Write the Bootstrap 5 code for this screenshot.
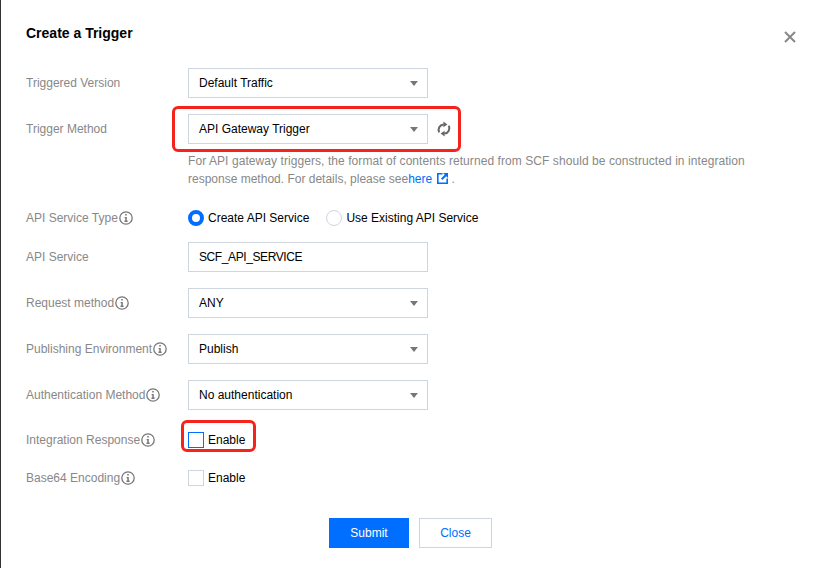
<!DOCTYPE html>
<html lang="en">
<head>
<meta charset="utf-8">
<title>Create a Trigger</title>
<link href="https://cdn.jsdelivr.net/npm/bootstrap@5.3.0/dist/css/bootstrap.min.css" rel="stylesheet">
<style>
html,body{height:568px;overflow:hidden;background:#fff}
body{font-family:"Liberation Sans",Arial,sans-serif;font-size:12px;color:#000;border-left:1px solid #333}
.dlg{position:relative;height:568px;padding:24px 0 0 25px}
.dlg-title{font-size:14px;font-weight:700;line-height:18px;margin:0 0 26px;color:#000}
.dlg-x{position:absolute;left:781px;top:27px;width:16px;height:16px;padding:0;border:0;background:none;display:block}
.frow{min-height:30px;margin-bottom:16px}
.frow-s{min-height:16px}
.flabel{width:162px;flex:none;color:#888;line-height:16px}
.fsel.form-select,.finp.form-control{width:240px;height:30px;border-radius:0;border:1px solid #cfd5de;font-size:12px;line-height:18px;padding:5px 30px 5px 10px;color:#000;box-shadow:none;background-color:#fff}
.finp.form-control{letter-spacing:-.4px}
.fsel.form-select{background-image:url("data:image/svg+xml,%3Csvg xmlns='http://www.w3.org/2000/svg' width='8' height='5'%3E%3Cpath d='M0 0h8L4 5z' fill='%23777'/%3E%3C/svg%3E");background-size:8px 5px;background-position:right 9px center}
.hint{margin:-8px 0 0 162px;width:580px;line-height:18px;color:#888;height:58px}
.hint a{color:#006eff;text-decoration:none}
.hint-l1{letter-spacing:.07px}
.ext-i{margin-left:5px;vertical-align:-1px}
.inf{margin-left:1px;vertical-align:-3px}
.fradio{width:16px;height:16px;border-radius:50%;border:1px solid #cfd5de;background:#fff;flex:none;margin:0}
.fradio.on{border:4px solid #006eff}
.fradio.gap-r{margin-left:17px}
.fcheck{width:16px;height:16px;border:1px solid #cfd5de;background:#fff;flex:none;margin:0}
.fcheck.on{border-color:#006eff}
.fopt{line-height:16px;color:#000}
.rbox{position:absolute;border:3px solid #f5231c;border-radius:6px;pointer-events:none}
.rb1{left:171px;top:106px;width:289px;height:46px}
.rb2{left:180px;top:420px;width:75px;height:32px}
.actions{position:absolute;left:328px;top:518px;gap:10px}
.btn-sub.btn{width:80px;height:30px;border-radius:0;background:#006eff;border:1px solid #006eff;color:#fff;font-size:12px;padding:0}
.btn-cl.btn{width:73px;height:30px;border-radius:0;background:#fff;border:1px solid #cfd5de;color:#006eff;font-size:12px;padding:0}
.mt-chk{margin-top:22px}
</style>
</head>
<body>
<div class="dlg">
  <h1 class="dlg-title">Create a Trigger</h1>
  <button class="dlg-x" type="button" aria-label="Close"><svg width="16" height="16" viewBox="0 0 16 16"><path d="M3 3l10 10M13 3L3 13" stroke="#888" stroke-width="2" fill="none"/></svg></button>

  <div class="frow d-flex align-items-center">
    <div class="flabel">Triggered Version</div>
    <select class="form-select fsel"><option>Default Traffic</option></select>
  </div>
  <div class="frow d-flex align-items-center">
    <div class="flabel">Trigger Method</div>
    <select class="form-select fsel"><option>API Gateway Trigger</option></select>
    <svg class="ms-2" width="16" height="16" viewBox="0 0 16 16" fill="none" stroke="#666" stroke-width="2"><path d="M3.2 11.4C1.6 8 3.4 3.9 7.6 3.4"/><path d="M12.8 4.6c1.6 3.4-.2 7.5-4.4 8"/><path d="M7.4 .4l4 3-4 2.8z" fill="#666" stroke="none"/><path d="M8.6 15.6l-4-3 4-2.8z" fill="#666" stroke="none"/></svg>
  </div>
  <div class="hint"><span class="hint-l1">For API gateway triggers, the format of contents returned from SCF should be constructed in integration</span> response method. For details, please see<a href="#">here<svg width="11" height="11" viewBox="0 0 11 11" class="ext-i"><path d="M0 0h5.5v1.6H1.6v7.8h7.8V5.5H11V11H0z" fill="#006eff"/><path d="M6 0h5v5L9.2 3.2 5.4 7 4 5.6l3.8-3.8z" fill="#006eff"/></svg></a> .</div>

  <div class="frow frow-s d-flex align-items-center">
    <div class="flabel">API Service Type<svg class="inf" width="14" height="14" viewBox="0 0 14 14"><circle cx="7" cy="7" r="6.2" fill="none" stroke="#777" stroke-width="1.3"/><path d="M6.2 3h1.6v1.6H6.2zM5.6 6h2.2v3.6h.8V11H5.5V9.6h.8V7.3h-.7z" fill="#777"/></svg></div>
    <div class="d-flex align-items-center">
      <span class="fradio on"></span><span class="fopt ms-1">Create API Service</span>
      <span class="fradio gap-r"></span><span class="fopt ms-1">Use Existing API Service</span>
    </div>
  </div>
  <div class="frow d-flex align-items-center">
    <div class="flabel">API Service</div>
    <input class="form-control finp" value="SCF_API_SERVICE">
  </div>
  <div class="frow d-flex align-items-center">
    <div class="flabel">Request method<svg class="inf" width="14" height="14" viewBox="0 0 14 14"><circle cx="7" cy="7" r="6.2" fill="none" stroke="#777" stroke-width="1.3"/><path d="M6.2 3h1.6v1.6H6.2zM5.6 6h2.2v3.6h.8V11H5.5V9.6h.8V7.3h-.7z" fill="#777"/></svg></div>
    <select class="form-select fsel"><option>ANY</option></select>
  </div>
  <div class="frow d-flex align-items-center">
    <div class="flabel">Publishing Environment<svg class="inf" width="14" height="14" viewBox="0 0 14 14"><circle cx="7" cy="7" r="6.2" fill="none" stroke="#777" stroke-width="1.3"/><path d="M6.2 3h1.6v1.6H6.2zM5.6 6h2.2v3.6h.8V11H5.5V9.6h.8V7.3h-.7z" fill="#777"/></svg></div>
    <select class="form-select fsel"><option>Publish</option></select>
  </div>
  <div class="frow d-flex align-items-center">
    <div class="flabel">Authentication Method<svg class="inf" width="14" height="14" viewBox="0 0 14 14"><circle cx="7" cy="7" r="6.2" fill="none" stroke="#777" stroke-width="1.3"/><path d="M6.2 3h1.6v1.6H6.2zM5.6 6h2.2v3.6h.8V11H5.5V9.6h.8V7.3h-.7z" fill="#777"/></svg></div>
    <select class="form-select fsel"><option>No authentication</option></select>
  </div>
  <div class="frow frow-s mt-chk d-flex align-items-center">
    <div class="flabel">Integration Response<svg class="inf" width="14" height="14" viewBox="0 0 14 14"><circle cx="7" cy="7" r="6.2" fill="none" stroke="#777" stroke-width="1.3"/><path d="M6.2 3h1.6v1.6H6.2zM5.6 6h2.2v3.6h.8V11H5.5V9.6h.8V7.3h-.7z" fill="#777"/></svg></div>
    <span class="fcheck on"></span><span class="fopt ms-1">Enable</span>
  </div>
  <div class="frow frow-s mt-chk d-flex align-items-center">
    <div class="flabel">Base64 Encoding<svg class="inf" width="14" height="14" viewBox="0 0 14 14"><circle cx="7" cy="7" r="6.2" fill="none" stroke="#777" stroke-width="1.3"/><path d="M6.2 3h1.6v1.6H6.2zM5.6 6h2.2v3.6h.8V11H5.5V9.6h.8V7.3h-.7z" fill="#777"/></svg></div>
    <span class="fcheck"></span><span class="fopt ms-1">Enable</span>
  </div>

  <div class="actions d-flex">
    <button class="btn btn-sub" type="button">Submit</button>
    <button class="btn btn-cl" type="button">Close</button>
  </div>
  <div class="rbox rb1"></div>
  <div class="rbox rb2"></div>
</div>
<script src="https://cdn.jsdelivr.net/npm/bootstrap@5.3.0/dist/js/bootstrap.bundle.min.js"></script>
</body>
</html>
